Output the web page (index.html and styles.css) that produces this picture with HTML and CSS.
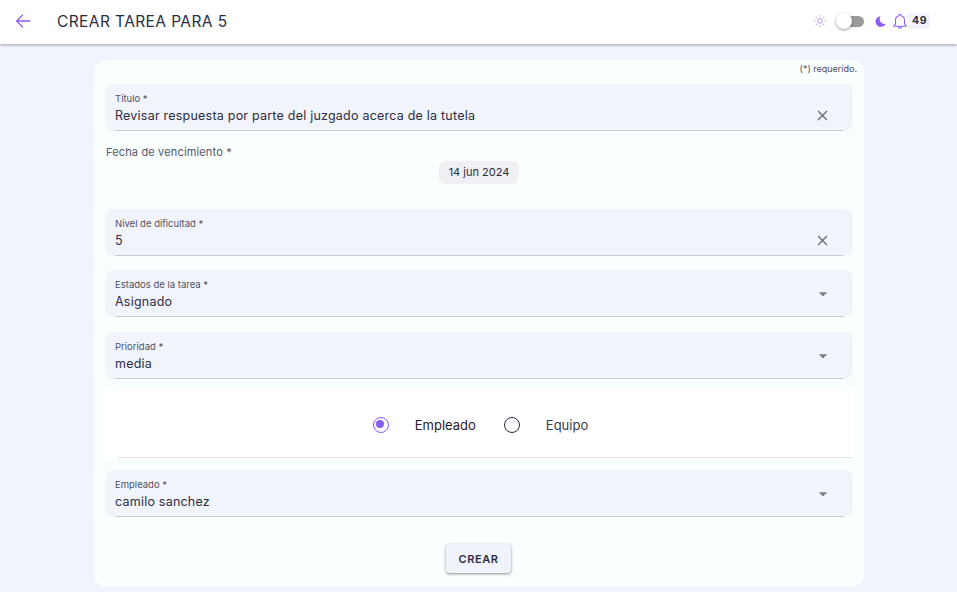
FILE: index.html
```html
<!DOCTYPE html>
<html lang="es">
<head>
  <meta charset="UTF-8">
  <title>Crear tarea</title>
  <link rel="stylesheet" href="styles.css">
</head>
<body>
  <header class="topbar">
    <button class="back-button" aria-label="Volver">
      <svg width="22" height="22" viewBox="0 0 24 24"><path d="M20 11.200H6.900l5.500-5.600L11.400 4.600 4 12l7.400 7.400 1-1-5.500-5.600H20z"/></svg>
    </button>
    <h1 class="page-title">CREAR TAREA PARA 5</h1>
    <div class="topbar-actions">
      <svg class="sun-icon" width="14" height="14" viewBox="0 0 24 24"><path d="M12 9c1.650 0 3 1.350 3 3s-1.350 3-3 3-3-1.350-3-3 1.350-3 3-3m0-2c-2.760 0-5 2.240-5 5s2.240 5 5 5 5-2.240 5-5-2.240-5-5-5zM2 13h2c.55 0 1-.45 1-1s-.45-1-1-1H2c-.55 0-1 .45-1 1s.45 1 1 1zm18 0h2c.55 0 1-.45 1-1s-.45-1-1-1h-2c-.55 0-1 .45-1 1s.45 1 1 1zM11 2v2c0 .55.45 1 1 1s1-.45 1-1V2c0-.55-.45-1-1-1s-1 .45-1 1zm0 18v2c0 .55.45 1 1 1s1-.45 1-1v-2c0-.55-.45-1-1-1s-1 .45-1 1zM5.990 4.580a.996.996 0 0 0-1.410 0 .996.996 0 0 0 0 1.410l1.060 1.060c.39.39 1.030.39 1.410 0s.39-1.030 0-1.410L5.990 4.580zm12.370 12.370a.996.996 0 0 0-1.410 0 .996.996 0 0 0 0 1.410l1.060 1.060c.39.39 1.030.39 1.410 0a.996.996 0 0 0 0-1.410l-1.060-1.060zm1.060-10.960a.996.996 0 0 0 0-1.410.996.996 0 0 0-1.410 0l-1.060 1.060c-.39.39-.39 1.030 0 1.410s1.030.39 1.410 0l1.060-1.060zM7.050 18.360a.996.996 0 0 0 0-1.410.996.996 0 0 0-1.410 0l-1.060 1.060c-.39.39-.39 1.030 0 1.410s1.030.39 1.410 0l1.060-1.060z"/></svg>
      <span class="switch"><span class="switch-thumb"></span></span>
      <svg class="moon-icon" width="13" height="13" viewBox="0 0 24 24"><path d="M12 2.500c-1 1.400-1.600 3.200-1.600 5 0 4.900 4 8.900 8.900 8.900.9 0 1.700-.1 2.500-.4-1.600 3.400-5.100 5.700-9 5.700C7.300 21.700 2.800 17.300 2.800 11.800c0-4.700 3.600-8.700 9.200-9.300z"/></svg>
      <svg class="bell-icon" width="18" height="18" viewBox="0 0 24 24"><path d="M12 3a1.500 1.500 0 0 0-1.500 1.500v.6C7.600 6 6 8.300 6 11v5l-2 2v1h16v-1l-2-2v-5c0-2.700-1.600-5-4.500-5.900v-.6A1.500 1.500 0 0 0 12 3zM10 19.500a2 2 0 0 0 4 0"/></svg>
      <span class="badge">49</span>
    </div>
  </header>

  <main class="card">
    <p class="required-note">(*) requerido.</p>

    <div class="field">
      <label class="field-label">Título *</label>
      <div class="field-value">Revisar respuesta por parte del juzgado acerca de la tutela</div>
      <svg class="clear-icon" width="17" height="17" viewBox="0 0 24 24"><path d="M19 6.410 17.590 5 12 10.590 6.410 5 5 6.410 10.590 12 5 17.590 6.410 19 12 13.410 17.590 19 19 17.590 13.410 12z"/></svg>
    </div>

    <div class="date-group">
      <p class="date-label">Fecha de vencimiento *</p>
      <div class="date-row"><span class="date-chip">14 jun 2024</span></div>
    </div>

    <div class="field">
      <label class="field-label">Nivel de dificultad *</label>
      <div class="field-value">5</div>
      <svg class="clear-icon" width="17" height="17" viewBox="0 0 24 24"><path d="M19 6.410 17.590 5 12 10.590 6.410 5 5 6.410 10.590 12 5 17.590 6.410 19 12 13.410 17.590 19 19 17.590 13.410 12z"/></svg>
    </div>

    <div class="field field-spaced">
      <label class="field-label">Estados de la tarea *</label>
      <div class="field-value">Asignado</div>
      <svg class="caret-icon" width="20" height="20" viewBox="0 0 24 24"><path d="M7 10l5 5 5-5z"/></svg>
    </div>

    <div class="field">
      <label class="field-label">Prioridad *</label>
      <div class="field-value">media</div>
      <svg class="caret-icon" width="20" height="20" viewBox="0 0 24 24"><path d="M7 10l5 5 5-5z"/></svg>
    </div>

    <div class="radio-box">
      <div class="radio-group">
        <span class="radio-option">
          <span class="radio checked"></span>
          <span class="radio-text">Empleado</span>
        </span>
        <span class="radio-option">
          <span class="radio"></span>
          <span class="radio-text muted">Equipo</span>
        </span>
      </div>
    </div>

    <div class="field">
      <label class="field-label">Empleado *</label>
      <div class="field-value">camilo sanchez</div>
      <svg class="caret-icon" width="20" height="20" viewBox="0 0 24 24"><path d="M7 10l5 5 5-5z"/></svg>
    </div>

    <div class="actions">
      <button class="create-button">CREAR</button>
    </div>
  </main>
</body>
</html>
```

FILE: styles.css
```css
* {
  margin: 0;
  padding: 0;
  box-sizing: border-box;
}

body {
  width: 957px;
  height: 592px;
  font-family: Inter, "Noto Sans", sans-serif;
  background: #f1f4fd;
  color: #2b2d42;
  overflow: hidden;
}

.topbar {
  display: flex;
  align-items: center;
  height: 44px;
  padding: 0 27px 2px 12px;
  background: #fff;
  box-shadow: 0 1px 3px rgba(0, 0, 0, 0.35);
}

.back-button {
  display: flex;
  width: 22px;
  height: 22px;
  border: none;
  background: none;
  fill: #8b5cf0;
}

.page-title {
  margin-left: 23px;
  font-size: 15.500px;
  font-weight: 400;
  letter-spacing: 0.4px;
}

.topbar-actions {
  display: flex;
  align-items: center;
  margin-left: auto;
}

.sun-icon {
  fill: #c4b0f5;
}

.switch {
  position: relative;
  width: 26px;
  height: 11px;
  margin-left: 11px;
  border-radius: 6px;
  background: #9a9a9a;
}

.switch-thumb {
  position: absolute;
  top: -2.500px;
  left: -2px;
  width: 16px;
  height: 16px;
  border-radius: 50%;
  background: #fff;
  box-shadow: 0 1px 3px rgba(0, 0, 0, 0.4);
}

.moon-icon {
  margin-left: 10px;
  fill: #8b5cf0;
}

.bell-icon {
  margin-left: 4px;
  fill: none;
  stroke: #8b5cf0;
  stroke-width: 1.400;
}

.badge {
  margin-left: -2px;
  padding: 1px 3px 2px 5px;
  border-radius: 4px;
  background: #f1f4fd;
  font-size: 10.500px;
  font-weight: 700;
  letter-spacing: 0.5px;
}

.card {
  width: 770px;
  height: 527px;
  margin: 16px 0 0 94px;
  padding: 4px 11px 0;
  border-radius: 12px;
  background: #f9feff;
}

.required-note {
  height: 20px;
  margin-right: -4px;
  font-size: 9px;
  line-height: 9px;
  text-align: right;
  color: #4a4c60;
}

.field {
  position: relative;
  height: 47px;
  margin-bottom: 14px;
  padding: 9px 10px 0;
  border-radius: 8px;
  background: #f2f4fc;
}

.field-spaced {
  margin-bottom: 15px;
}

.field::after {
  content: "";
  position: absolute;
  left: 10px;
  right: 10px;
  bottom: 0;
  border-bottom: 1px solid #c9cad2;
}

.field-label {
  display: block;
  font-size: 9.500px;
  line-height: 12px;
  color: #50525f;
}

.field-value {
  margin-top: 3px;
  font-size: 12.500px;
  line-height: 16px;
  letter-spacing: 0.22px;
}

.clear-icon {
  position: absolute;
  right: 22px;
  top: 23px;
  fill: #6d6f7b;
}

.caret-icon {
  position: absolute;
  right: 20px;
  top: 14px;
  fill: #7a7c88;
}

.date-group {
  height: 64px;
  margin-top: 7px;
}

.date-label {
  padding-left: 1px;
  font-size: 11px;
  line-height: 14px;
  color: #55576a;
  letter-spacing: 0.15px;
}

.date-row {
  display: flex;
  justify-content: center;
  margin-top: 2px;
}

.date-chip {
  width: 80px;
  height: 23px;
  border-radius: 7px;
  background: #eff0f3;
  font-size: 11px;
  line-height: 23px;
  text-align: center;
  color: #2b2d42;
}

.radio-box {
  height: 68px;
  margin-top: -3px;
  margin-bottom: 12px;
  padding-left: 13px;
  background: #fff;
}

.radio-group {
  display: flex;
  justify-content: center;
  align-items: center;
  gap: 28px;
  height: 68px;
  padding: 2px 10px 0 0;
  border-bottom: 1px solid #e0e0e0;
}

.radio-option {
  display: flex;
  align-items: center;
  gap: 26px;
  font-size: 13px;
}

.radio {
  position: relative;
  width: 16px;
  height: 16px;
  border: 1.500px solid #2b2d42;
  border-radius: 50%;
}

.radio.checked {
  border-color: #8b5cf0;
}

.radio.checked::after {
  content: "";
  position: absolute;
  top: 2.500px;
  left: 2.500px;
  width: 8px;
  height: 8px;
  border-radius: 50%;
  background: #8b5cf0;
}

.radio-text {
  color: #1f2030;
}

.radio-text.muted {
  color: #3a3c4c;
}

.actions {
  display: flex;
  justify-content: center;
  margin-top: 27px;
  padding-right: 1px;
}

.create-button {
  width: 65px;
  height: 29px;
  border: none;
  border-radius: 4px;
  background: #f1f3fc;
  font-family: Inter, sans-serif;
  font-size: 11px;
  font-weight: 600;
  letter-spacing: 0.6px;
  color: #2b2d42;
  box-shadow: 0 1px 3px rgba(0, 0, 0, 0.45);
}
```
